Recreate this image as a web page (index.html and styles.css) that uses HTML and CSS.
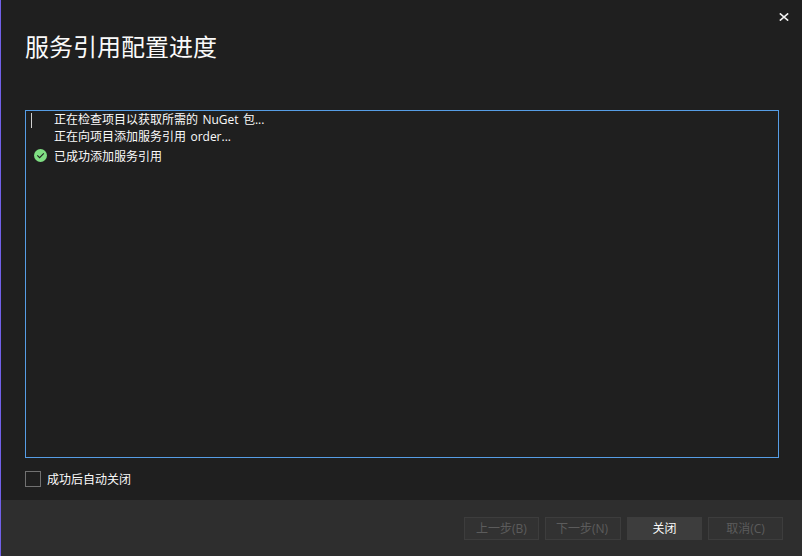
FILE: index.html
```html
<!DOCTYPE html>
<html lang="zh-CN">
<head>
  <meta charset="UTF-8" />
  <title>服务引用配置进度</title>
  <link rel="stylesheet" href="styles.css">
</head>
<body>
  <div class="dialog">
    <div class="header">
      <button class="close-button" aria-label="关闭">
        <svg width="10" height="8" viewBox="0 0 10 8">
          <path d="M0.8 0.4L9.2 7.6M9.2 0.4L0.8 7.6" stroke="#f1f1f1" stroke-width="1.6" />
        </svg>
      </button>
      <h1 class="title">服务引用配置进度</h1>
    </div>

    <div class="log">
      <div class="caret"></div>
      <div class="lines">
        <div class="line">正在检查项目以获取所需的 NuGet 包...</div>
        <div class="line">正在向项目添加服务引用 order...</div>
        <div class="line done">
          <svg class="check" width="13" height="13" viewBox="0 0 13 13">
            <circle cx="6.5" cy="6.5" r="6.5" fill="#7fdf83" />
            <path d="M3.3 6.3L5.6 8.6L9.8 4.4" fill="none" stroke="#1f1f1f" stroke-width="1.1" />
          </svg>
          <span>已成功添加服务引用</span>
        </div>
      </div>
    </div>

    <label class="auto-close">
      <input type="checkbox" />
      <span>成功后自动关闭</span>
    </label>

    <div class="footer">
      <button class="btn" disabled>上一步(B)</button>
      <button class="btn wide" disabled>下一步(N)</button>
      <button class="btn primary">关闭</button>
      <button class="btn" disabled>取消(C)</button>
    </div>
  </div>
</body>
</html>
```
FILE: styles.css
```css
* {
  box-sizing: border-box;
}
body {
  margin: 0;
  background: #1f1f1f;
  color: #fafafa;
  font-family: "Open Sans", "Noto Sans CJK SC", sans-serif;
  font-size: 12px;
}
.dialog {
  height: 556px;
  border-left: 1px solid #7160e8;
  display: flex;
  flex-direction: column;
}
.header {
  height: 110px;
  display: flex;
  flex-direction: column;
}
.close-button {
  align-self: flex-end;
  margin: 13px 13px 0 0;
  padding: 0;
  border: none;
  background: none;
  height: 8px;
}
.close-button svg {
  display: block;
}
.title {
  margin: 9px 0 0 24px;
  font-size: 24px;
  font-weight: 400;
  line-height: 34px;
}
.log {
  margin: 0 23px 0 24px;
  height: 348px;
  border: 1px solid #569de5;
  display: flex;
}
.caret {
  width: 1px;
  height: 15px;
  margin: 2px 0 0 5px;
  background: #d0d0d0;
}
.lines {
  padding-left: 22px;
}
.line {
  display: flex;
  height: 17px;
  line-height: 17px;
  white-space: nowrap;
  word-spacing: 1.3px;
}
.line.done {
  height: 24px;
  line-height: 24px;
  margin-left: -20px;
}
.check {
  margin: 4px 7px 0 0;
}
.auto-close {
  margin: 13px 0 0 24px;
  height: 16px;
  display: flex;
  align-items: center;
  gap: 6px;
}
.auto-close input {
  appearance: none;
  width: 16px;
  height: 16px;
  margin: 0;
  border: 1px solid #717171;
}
.footer {
  margin-top: auto;
  height: 56px;
  padding: 17px 19px 0 0;
  background: #2e2e2e;
  display: flex;
  justify-content: flex-end;
  gap: 6px;
}
.btn {
  width: 75px;
  height: 23px;
  padding: 0;
  font: inherit;
  line-height: 21px;
  color: #5c5c5c;
  background: #323232;
  border: 1px solid #3d3d3d;
}
.btn.wide {
  width: 76px;
  padding-right: 2px;
}
.btn.primary {
  color: #fafafa;
  background: #3d3d3d;
}
```
